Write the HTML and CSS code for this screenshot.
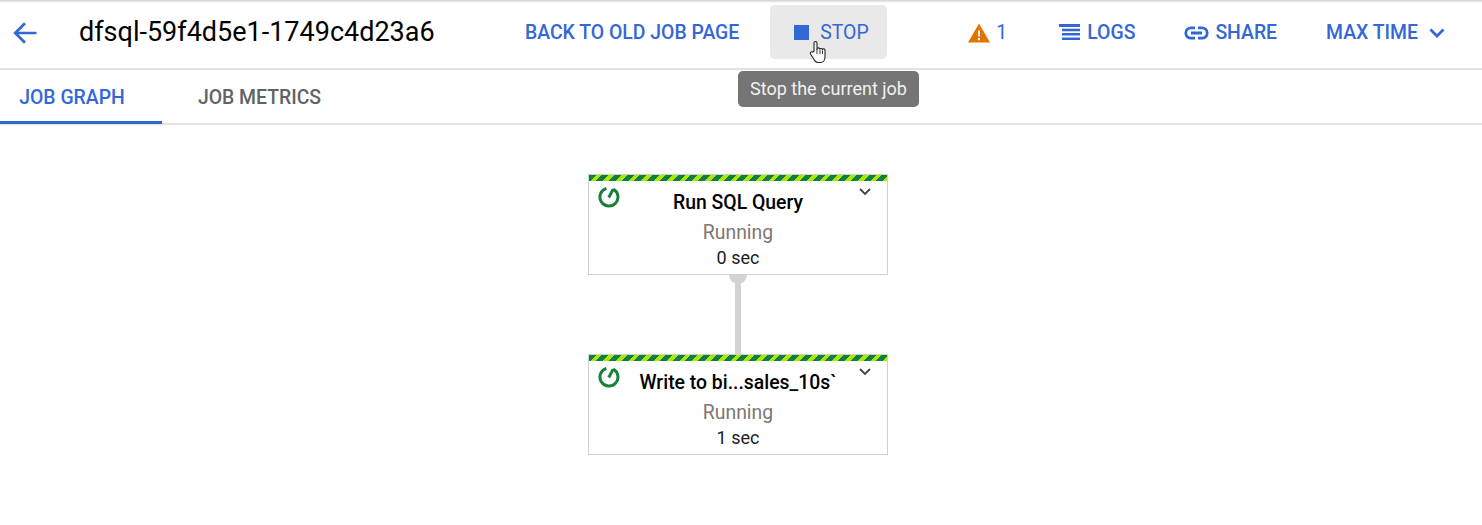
FILE: index.html
```html
<!DOCTYPE html>
<html lang="en">
<head>
<meta charset="utf-8">
<title>Job</title>
<link rel="stylesheet" href="styles.css">
</head>
<body>
<div class="top-shadow"></div>
<header class="header">
  <svg class="back" viewBox="0 0 26 26" width="26" height="26"><path d="M24.500 13H3.500M13 3.200L3.200 13l9.800 9.800" fill="none" stroke="#3367d6" stroke-width="2.700"/></svg>
  <h1 class="title">dfsql-59f4d5e1-1749c4d23a6</h1>
  <a class="btn back-old">BACK TO OLD JOB PAGE</a>
  <a class="btn stop"><span class="stop-square"></span>STOP</a>
  <a class="btn warn">
    <svg viewBox="0 0 22 20" width="22" height="20"><path d="M0 19.500L11 .5l11 19z" fill="#e37400"/><rect x="10" y="7.500" width="2" height="6" fill="#fff"/><rect x="10" y="15" width="2" height="2.200" fill="#fff"/></svg>
    <span>1</span>
  </a>
  <a class="btn logs">
    <svg viewBox="0 0 21 17" width="21" height="17"><path d="M0 0h21v3H0zM3 4.700h18v2.600H3zM3 9h18v2.600H3zM3 13.400h18V16H3z" fill="#3367d6"/></svg>
    LOGS
  </a>
  <a class="btn share">
    <svg viewBox="0 0 25 14" width="25" height="14"><path d="M11 1.800H7a5.200 5.200 0 0 0 0 10.400h4M14 1.800h4a5.200 5.200 0 0 1 0 10.400h-4M7 7h11" fill="none" stroke="#3367d6" stroke-width="2.800"/></svg>
    SHARE
  </a>
  <a class="btn maxtime">MAX TIME
    <svg viewBox="0 0 16 10" width="16" height="10"><path d="M1.500 1.500L8 8l6.500-6.500" fill="none" stroke="#3367d6" stroke-width="2.800"/></svg>
  </a>
</header>
<nav class="tabs">
  <a class="tab active">JOB GRAPH</a>
  <a class="tab">JOB METRICS</a>
</nav>
<div class="tooltip">Stop the current job</div>
<svg class="cursor" viewBox="0 0 18 24" width="18" height="24"><path d="M5 11V3a1.500 1.500 0 0 1 3 0v6l.5-.5a1.400 1.400 0 0 1 2.500.5 1.400 1.400 0 0 1 2.400.5 1.400 1.400 0 0 1 2.600.8V17c0 3-1.800 5.500-4.500 5.500H9c-2 0-3-1-4-3L1.500 14c-.8-1.500 1-3 2.300-1.800z" fill="#fff" stroke="#222" stroke-width="1.100"/><path d="M8 9v5M11 10v4M13.500 10.500V14" stroke="#222" stroke-width=".9" fill="none"/></svg>
<main class="graph">
  <div class="connector"></div>
  <div class="node node-a">
    <div class="stripes"></div>
    <svg class="status" viewBox="0 0 22 22" width="22" height="22"><path d="M15.200 3.100a9 9 0 1 1-6.800-.7" fill="none" stroke="#188038" stroke-width="3"/><path d="M15.200 3.100L10.800 11.500" stroke="#188038" stroke-width="3" fill="none"/></svg>
    <svg class="chev" viewBox="0 0 12 8" width="12" height="8"><path d="M1 1l5 5 5-5" fill="none" stroke="#444" stroke-width="1.800"/></svg>
    <div class="name">Run SQL Query</div>
    <div class="state">Running</div>
    <div class="time">0 sec</div>
  </div>
  <div class="node node-b">
    <div class="stripes"></div>
    <svg class="status" viewBox="0 0 22 22" width="22" height="22"><path d="M15.200 3.100a9 9 0 1 1-6.800-.7" fill="none" stroke="#188038" stroke-width="3"/><path d="M15.200 3.100L10.800 11.500" stroke="#188038" stroke-width="3" fill="none"/></svg>
    <svg class="chev" viewBox="0 0 12 8" width="12" height="8"><path d="M1 1l5 5 5-5" fill="none" stroke="#444" stroke-width="1.800"/></svg>
    <div class="name">Write to bi...sales_10s`</div>
    <div class="state">Running</div>
    <div class="time">1 sec</div>
  </div>
</main>
</body>
</html>
```
FILE: styles.css
```css
* { box-sizing: border-box; }
html, body { margin: 0; padding: 0; }
body {
  width: 1482px;
  height: 525px;
  overflow: hidden;
  background: #fff;
  font-family: Roboto, "Liberation Sans", sans-serif;
  position: relative;
}
.top-shadow {
  height: 3px;
  background: linear-gradient(#d0d0d0, #fff);
}
.header {
  height: 67px;
  display: flex;
  align-items: center;
  padding: 0 0 6px 12px;
  border-bottom: 2px solid #e3e3e3;
}
.back { flex: none; }
.title {
  margin: 0 0 2px 41px;
  width: 446px;
  font-size: 27px;
  font-weight: 400;
  color: #000;
  white-space: nowrap;
}
.btn {
  display: flex;
  align-items: center;
  font-size: 19.400px;
  font-weight: 500;
  color: #3367d6;
  white-space: nowrap;
}
.stop {
  width: 117px;
  height: 54px;
  margin-left: 31px;
  margin-top: -2px;
  padding: 2px 0 0 24px;
  background: #e9e9e9;
  border-radius: 5px;
  font-weight: 400;
}
.stop-square {
  width: 15px;
  height: 15px;
  margin-right: 11px;
  background: #3367d6;
}
.warn { margin-left: 81px; gap: 6px; font-weight: 400; }
.logs { margin-left: 52px; gap: 7px; }
.share { margin-left: 49px; gap: 6px; }
.maxtime { margin-left: 49px; gap: 11px; }
.tabs {
  height: 55px;
  display: flex;
  border-bottom: 2px solid #e3e3e3;
}
.tab {
  width: 162px;
  display: flex;
  align-items: center;
  justify-content: center;
  font-size: 19.400px;
  font-weight: 500;
  color: #5f6368;
  margin-bottom: -1px;
  padding-bottom: 0;
}
.tab.active {
  color: #3367d6;
  border-bottom: 3px solid #3367d6;
  padding-top: 3px;
  padding-right: 18px;
}
.tab + .tab { width: 195px; }
.tooltip {
  position: absolute;
  left: 738px;
  top: 71px;
  width: 181px;
  height: 36px;
  display: flex;
  align-items: center;
  justify-content: center;
  padding-bottom: 2px;
  background: #757575;
  border-radius: 5px;
  color: #f1f1f1;
  font-size: 18px;
  white-space: nowrap;
}
.cursor {
  position: absolute;
  left: 809px;
  top: 40px;
}
.graph {
  position: relative;
  height: 400px;
}
.connector {
  position: absolute;
  left: 735px;
  top: 150px;
  width: 6px;
  height: 80px;
  background: #d3d3d3;
}
.connector::before {
  content: "";
  position: absolute;
  left: -6px;
  top: -6px;
  width: 18px;
  height: 15px;
  border-radius: 0 0 9px 9px;
  background: #d3d3d3;
}
.node {
  position: absolute;
  left: 588px;
  width: 300px;
  height: 101px;
  background: #fff;
  border: 1px solid #d0d0d0;
  display: flex;
  flex-direction: column;
  align-items: center;
  color: #000;
}
.node-a { top: 49px; }
.node-b { top: 229px; }
.stripes {
  align-self: stretch;
  flex: none;
  height: 6px;
  background: repeating-linear-gradient(135deg, #0b8043 0 5px, #aee600 5px 9px);
}
.status { position: absolute; left: 9px; top: 11px; }
.chev { position: absolute; left: 270px; top: 13px; }
.name {
  margin-top: 11px;
  font-size: 19.400px;
  font-weight: 500;
  line-height: 22px;
}
.state {
  margin-top: 8px;
  font-size: 19.400px;
  line-height: 22px;
  color: #80776f;
}
.time {
  margin-top: 4px;
  font-size: 18px;
  line-height: 20px;
  color: #202124;
}
```
